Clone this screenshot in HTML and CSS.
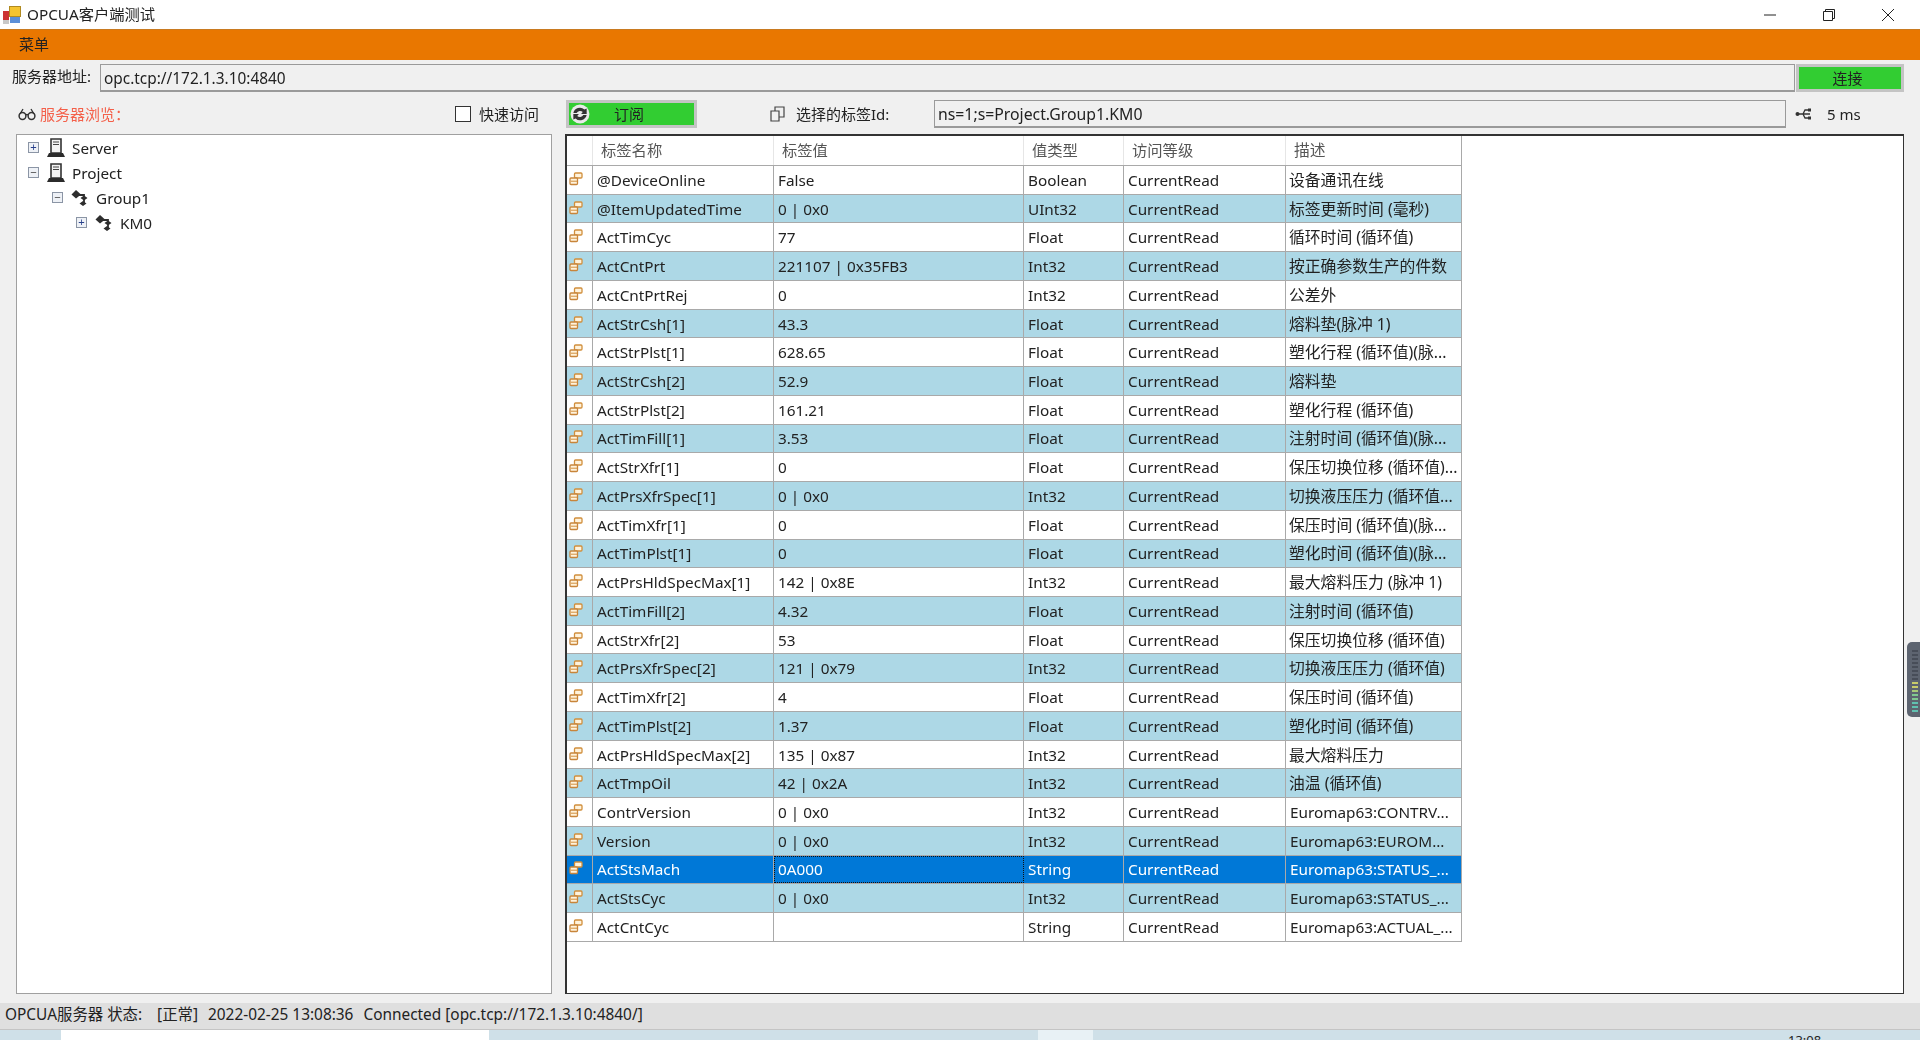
FILE: index.html
```html
<!DOCTYPE html>
<html lang="zh-CN">
<head>
<meta charset="utf-8">
<title>OPCUA客户端测试</title>
<link rel="stylesheet" href="styles.css">
</head>
<body>
<svg class="defs" width="0" height="0" aria-hidden="true">
  <symbol id="tag" viewBox="0 0 14 14">
    <rect x="5.500" y="1" width="7.500" height="5" rx="1" fill="#fff3dc" stroke="#d18f3c" stroke-width="1.300"/>
    <rect x="1" y="6" width="7.500" height="6.500" rx="1" fill="#fff3dc" stroke="#c8853a" stroke-width="1.300"/>
    <path d="M2 9.200h6" stroke="#d18f3c"/>
  </symbol>
  <symbol id="server" viewBox="0 0 18 20">
    <path d="M4 1h10v14H4z" fill="#f3f3f3" stroke="#333" stroke-width="1.600"/>
    <path d="M6 4h6M6 6.500h6" stroke="#444" stroke-width="1.200"/>
    <path d="M2 15h14l2 4H0z" fill="#2b2b2b"/>
  </symbol>
  <symbol id="group" viewBox="0 0 18 18">
    <path d="M0.500 5.500L5 1l5 4.500L5 9.500z" fill="#2e2e2e"/>
    <path d="M9.500 9L13 6.500 16.500 9 13 11.500zM8.500 14.500L12 12l3.500 2.500L12 17z" fill="#2e2e2e"/>
    <path d="M6 6h7v8" fill="none" stroke="#2e2e2e" stroke-width="1.800"/>
  </symbol>
</svg>

<div class="titlebar">
  <svg class="app-icon" viewBox="0 0 18 18">
    <rect x="6.500" y="0.500" width="11" height="10" fill="#f4c430" stroke="#b08a20"/>
    <rect x="0" y="5" width="6" height="9" fill="#cc3333"/>
    <rect x="7" y="11" width="10" height="6" fill="#5b8fd8"/>
    <rect x="0" y="14" width="6" height="4" fill="#c8c8c8"/>
  </svg>
  <span class="title-text">OPCUA客户端测试</span>
  <div class="win-controls">
    <svg class="win-btn" viewBox="0 0 14 14"><path d="M1 7h12" stroke="#222" stroke-width="1"/></svg>
    <svg class="win-btn" viewBox="0 0 14 14"><path d="M1.500 3.500h9v9h-9zM3.500 3.500v-2h9v9h-2" fill="none" stroke="#222"/></svg>
    <svg class="win-btn" viewBox="0 0 14 14"><path d="M1 1l12 12M13 1L1 13" stroke="#222"/></svg>
  </div>
</div>

<div class="menubar"><span>菜单</span></div>

<div class="addr-row">
  <span class="addr-label">服务器地址:</span>
  <div class="field addr-field">opc.tcp://172.1.3.10:4840</div>
  <div class="btn btn-connect"><span>连接</span></div>
</div>

<div class="tool-row">
  <div class="tool-left">
    <svg class="glasses" viewBox="0 0 18 14"><circle cx="4.500" cy="9" r="3.400" fill="none" stroke="#333" stroke-width="1.500"/><circle cx="13.500" cy="9" r="3.400" fill="none" stroke="#333" stroke-width="1.500"/><path d="M8 8q1-1 2 0M2 7l3-5M16 7l-3-5" fill="none" stroke="#333" stroke-width="1.300"/></svg>
    <span class="browse-label">服务器浏览：</span>
    <span class="check-box"></span>
    <span class="check-label">快速访问</span>
  </div>
  <div class="btn btn-sub">
    <svg class="refresh" viewBox="0 0 18 18"><circle cx="9" cy="9" r="8.500" fill="#eaeaea"/><path d="M3 8a6 6 0 0 1 10-3l2-1v5h-5l1.500-1.800A3.500 3.500 0 0 0 6 8zM15 10a6 6 0 0 1-10 3l-2 1V9h5L6.500 10.800A3.500 3.500 0 0 0 12 10z" fill="#333"/></svg>
    <span>订阅</span>
  </div>
  <svg class="copy-icon" viewBox="0 0 15 16"><path d="M1 5h8v10H1zM5 5V1h9v10H9" fill="none" stroke="#444" stroke-width="1.200"/></svg>
  <span class="id-label">选择的标签Id:</span>
  <div class="field id-field">ns=1;s=Project.Group1.KM0</div>
  <svg class="usb-icon" viewBox="0 0 18 14"><path d="M3 7h12M8 7l2-4h3M8 7l2 4h3" fill="none" stroke="#333" stroke-width="1.300"/><circle cx="2.500" cy="7" r="2" fill="#333"/><rect x="13" y="1.500" width="3" height="3" fill="#333"/><rect x="13" y="9.500" width="3" height="3" fill="#333"/></svg>
  <span class="ms">5 ms</span>
</div>

<div class="panels">
  <div class="tree">
    <div class="node"><span class="exp">+</span><svg class="node-icon"><use href="#server"/></svg><span>Server</span></div>
    <div class="node"><span class="exp open">−</span><svg class="node-icon"><use href="#server"/></svg><span>Project</span></div>
    <div class="node lvl2"><span class="exp open">−</span><svg class="node-icon"><use href="#group"/></svg><span>Group1</span></div>
    <div class="node lvl3"><span class="exp">+</span><svg class="node-icon"><use href="#group"/></svg><span>KM0</span></div>
  </div>

  <div class="grid-panel">
    <div class="row head"><div></div><div>标签名称</div><div>标签值</div><div>值类型</div><div>访问等级</div><div>描述</div></div>
    <div class="row"><div class="ic"><svg><use href="#tag"/></svg></div><div>@DeviceOnline</div><div>False</div><div>Boolean</div><div>CurrentRead</div><div>设备通讯在线</div></div>
    <div class="row alt"><div class="ic"><svg><use href="#tag"/></svg></div><div>@ItemUpdatedTime</div><div>0 | 0x0</div><div>UInt32</div><div>CurrentRead</div><div>标签更新时间 (毫秒)</div></div>
    <div class="row"><div class="ic"><svg><use href="#tag"/></svg></div><div>ActTimCyc</div><div>77</div><div>Float</div><div>CurrentRead</div><div>循环时间 (循环值)</div></div>
    <div class="row alt"><div class="ic"><svg><use href="#tag"/></svg></div><div>ActCntPrt</div><div>221107 | 0x35FB3</div><div>Int32</div><div>CurrentRead</div><div>按正确参数生产的件数</div></div>
    <div class="row"><div class="ic"><svg><use href="#tag"/></svg></div><div>ActCntPrtRej</div><div>0</div><div>Int32</div><div>CurrentRead</div><div>公差外</div></div>
    <div class="row alt"><div class="ic"><svg><use href="#tag"/></svg></div><div>ActStrCsh[1]</div><div>43.3</div><div>Float</div><div>CurrentRead</div><div>熔料垫(脉冲 1)</div></div>
    <div class="row"><div class="ic"><svg><use href="#tag"/></svg></div><div>ActStrPlst[1]</div><div>628.65</div><div>Float</div><div>CurrentRead</div><div>塑化行程 (循环值)(脉...</div></div>
    <div class="row alt"><div class="ic"><svg><use href="#tag"/></svg></div><div>ActStrCsh[2]</div><div>52.9</div><div>Float</div><div>CurrentRead</div><div>熔料垫</div></div>
    <div class="row"><div class="ic"><svg><use href="#tag"/></svg></div><div>ActStrPlst[2]</div><div>161.21</div><div>Float</div><div>CurrentRead</div><div>塑化行程 (循环值)</div></div>
    <div class="row alt"><div class="ic"><svg><use href="#tag"/></svg></div><div>ActTimFill[1]</div><div>3.53</div><div>Float</div><div>CurrentRead</div><div>注射时间 (循环值)(脉...</div></div>
    <div class="row"><div class="ic"><svg><use href="#tag"/></svg></div><div>ActStrXfr[1]</div><div>0</div><div>Float</div><div>CurrentRead</div><div>保压切换位移 (循环值)...</div></div>
    <div class="row alt"><div class="ic"><svg><use href="#tag"/></svg></div><div>ActPrsXfrSpec[1]</div><div>0 | 0x0</div><div>Int32</div><div>CurrentRead</div><div>切换液压压力 (循环值...</div></div>
    <div class="row"><div class="ic"><svg><use href="#tag"/></svg></div><div>ActTimXfr[1]</div><div>0</div><div>Float</div><div>CurrentRead</div><div>保压时间 (循环值)(脉...</div></div>
    <div class="row alt"><div class="ic"><svg><use href="#tag"/></svg></div><div>ActTimPlst[1]</div><div>0</div><div>Float</div><div>CurrentRead</div><div>塑化时间 (循环值)(脉...</div></div>
    <div class="row"><div class="ic"><svg><use href="#tag"/></svg></div><div>ActPrsHldSpecMax[1]</div><div>142 | 0x8E</div><div>Int32</div><div>CurrentRead</div><div>最大熔料压力 (脉冲 1)</div></div>
    <div class="row alt"><div class="ic"><svg><use href="#tag"/></svg></div><div>ActTimFill[2]</div><div>4.32</div><div>Float</div><div>CurrentRead</div><div>注射时间 (循环值)</div></div>
    <div class="row"><div class="ic"><svg><use href="#tag"/></svg></div><div>ActStrXfr[2]</div><div>53</div><div>Float</div><div>CurrentRead</div><div>保压切换位移 (循环值)</div></div>
    <div class="row alt"><div class="ic"><svg><use href="#tag"/></svg></div><div>ActPrsXfrSpec[2]</div><div>121 | 0x79</div><div>Int32</div><div>CurrentRead</div><div>切换液压压力 (循环值)</div></div>
    <div class="row"><div class="ic"><svg><use href="#tag"/></svg></div><div>ActTimXfr[2]</div><div>4</div><div>Float</div><div>CurrentRead</div><div>保压时间 (循环值)</div></div>
    <div class="row alt"><div class="ic"><svg><use href="#tag"/></svg></div><div>ActTimPlst[2]</div><div>1.37</div><div>Float</div><div>CurrentRead</div><div>塑化时间 (循环值)</div></div>
    <div class="row"><div class="ic"><svg><use href="#tag"/></svg></div><div>ActPrsHldSpecMax[2]</div><div>135 | 0x87</div><div>Int32</div><div>CurrentRead</div><div>最大熔料压力</div></div>
    <div class="row alt"><div class="ic"><svg><use href="#tag"/></svg></div><div>ActTmpOil</div><div>42 | 0x2A</div><div>Int32</div><div>CurrentRead</div><div>油温 (循环值)</div></div>
    <div class="row"><div class="ic"><svg><use href="#tag"/></svg></div><div>ContrVersion</div><div>0 | 0x0</div><div>Int32</div><div>CurrentRead</div><div class="en">Euromap63:CONTRV...</div></div>
    <div class="row alt"><div class="ic"><svg><use href="#tag"/></svg></div><div>Version</div><div>0 | 0x0</div><div>Int32</div><div>CurrentRead</div><div class="en">Euromap63:EUROM...</div></div>
    <div class="row sel"><div class="ic"><svg><use href="#tag"/></svg></div><div>ActStsMach</div><div class="focus">0A000</div><div>String</div><div>CurrentRead</div><div class="en">Euromap63:STATUS_...</div></div>
    <div class="row alt"><div class="ic"><svg><use href="#tag"/></svg></div><div>ActStsCyc</div><div>0 | 0x0</div><div>Int32</div><div>CurrentRead</div><div class="en">Euromap63:STATUS_...</div></div>
    <div class="row"><div class="ic"><svg><use href="#tag"/></svg></div><div>ActCntCyc</div><div></div><div>String</div><div>CurrentRead</div><div class="en">Euromap63:ACTUAL_...</div></div>
  </div>
</div>

<div class="statusbar">
  <span class="st-label">OPCUA服务器 状态:</span><span>[正常]</span><span>2022-02-25 13:08:36</span><span>Connected [opc.tcp://172.1.3.10:4840/]</span>
</div>

<div class="taskbar">
  <div class="task-white"></div>
  <div class="task-light"></div>
  <div class="task-clock">13:08</div>
</div>

<div class="side-widget">
  <div class="leds">
    <i class="off"></i><i class="off"></i><i class="off"></i><i class="off"></i><i class="off"></i><i class="off"></i><i class="off"></i><i class="off"></i>
    <i class="y"></i><i class="y"></i><i class="yg"></i><i class="g"></i><i class="g"></i><i class="t"></i><i class="t"></i><i class="t"></i>
  </div>
</div>
</body>
</html>
```
FILE: styles.css
```css
* { box-sizing: border-box; }
html, body { height: 100%; }
body {
  margin: 0;
  width: 1920px;
  height: 1040px;
  overflow: hidden;
  display: flex;
  flex-direction: column;
  background: #f0f0f0;
  color: #222;
  font: 15px/20px "Noto Sans", "Noto Sans CJK SC", sans-serif;
  position: relative;
  filter: blur(0.35px);
}
.defs { position: absolute; }

.titlebar {
  height: 29px;
  background: #fff;
  display: flex;
  align-items: center;
  padding-left: 3px;
}
.app-icon { width: 18px; height: 18px; margin-right: 6px; }
.title-text { font-size: 15.300px; position: relative; top: -1px; }
.win-controls {
  margin-left: auto;
  display: flex;
  gap: 45px;
  padding-right: 25px;
}
.win-btn { width: 14px; height: 14px; }

.menubar {
  height: 31px;
  background: #e97700;
  border-top: 1px solid #c97a20;
  display: flex;
  align-items: center;
  padding-left: 19px;
  padding-bottom: 2px;
  font-size: 15px;
}

.addr-row {
  height: 28px;
  margin-top: 4px;
  display: flex;
  align-items: center;
  padding-left: 12px;
}
.addr-label { width: 88px; position: relative; top: -2px; }
.field {
  height: 28px;
  background: #f0f0f0;
  border: 1px solid #9a9a9a;
  border-bottom-width: 2px;
  padding-left: 3px;
  display: flex;
  align-items: center;
}
.addr-field { width: 1695px; font-size: 15.400px; padding-top: 2px; }
.btn {
  background: #32cd32;
  border: 3px solid #c4c4c4;
  display: flex;
  align-items: center;
  height: 28px;
}
.btn-connect { width: 108px; margin-left: 1px; justify-content: center; padding-right: 5px; }
.tool-row {
  height: 28px;
  margin-top: 8px;
  display: flex;
  align-items: center;
  padding-left: 18px;
}
.tool-left { width: 548px; display: flex; align-items: center; }
.glasses { width: 18px; height: 14px; margin-right: 4px; }
.browse-label { color: #f4604a; width: 415px; }
.check-box {
  width: 16px;
  height: 16px;
  background: #fff;
  border: 1px solid #333;
  margin-right: 8px;
}
.btn-sub {
  width: 131px;
  padding-left: 1px;
  border-width: 3px;
}
.refresh { width: 20px; height: 20px; margin-right: 24px; }
.copy-icon { width: 15px; height: 16px; margin-left: 73px; margin-right: 11px; }
.id-label { width: 138px; }
.id-field { width: 852px; font-size: 15.800px; }
.usb-icon { width: 18px; height: 14px; margin-left: 9px; margin-right: 14px; }

.panels {
  height: 860px;
  margin-top: 6px;
  padding: 0 16px;
  display: flex;
  gap: 13px;
}
.tree {
  width: 536px;
  background: #fff;
  border: 1px solid #a0a0a0;
  font-size: 15.300px;
}
.node {
  height: 25px;
  display: flex;
  align-items: center;
  padding-left: 11px;
}
.lvl2 { padding-left: 35px; }
.lvl3 { padding-left: 59px; }
.exp {
  width: 11px;
  height: 11px;
  border: 1px solid #8b95a5;
  background: #eef1f6;
  color: #27408b;
  font: 11px/9px "Liberation Sans", sans-serif;
  text-align: center;
}
.open { color: #444; }
.node-icon { width: 18px; height: 20px; margin: 0 7px 0 8px; }

.grid-panel {
  width: 1339px;
  background: #fff;
  border: 1px solid #333;
  border-width: 2px 1px 1px 2px;
  overflow: hidden;
}
.row {
  display: grid;
  grid-template-columns: 26px 181px 250px 100px 162px 176px;
  width: 895px;
  height: 28.740px;
  border-bottom: 1px solid #a9a9a9;
  align-items: stretch;
}
.row > div {
  border-right: 1px solid #a9a9a9;
  padding-left: 4px;
  display: flex;
  align-items: center;
  white-space: nowrap;
  overflow: hidden;
  font-size: 15.300px;
}
.row > div:last-child { font-size: 15.800px; padding-left: 3px; }
.row > div.en { font-size: 15.300px; padding-left: 4px; }
.head {
  height: 30px;
  color: #555;
}
.head > div {
  border-right-color: #e6e6e6;
  padding-left: 8px;
  padding-bottom: 2px;
}
.head > div:last-child { border-right-color: #a9a9a9; padding-left: 8px; }
.alt { background: #add8e6; }
.sel { background: #0078d7; color: #fff; }
.row > .focus { border: 1px dotted #111; padding-left: 3px; }
.row > .ic { padding-left: 2px; }
.ic svg { width: 14px; height: 14px; margin-top: -2px; }

.statusbar {
  height: 26px;
  margin-top: 9px;
  background: #dfdfdf;
  display: flex;
  align-items: center;
  padding-left: 5px;
  padding-bottom: 2px;
  gap: 10px;
  font-size: 15.400px;
}
.st-label { margin-right: 5px; }
.taskbar {
  height: 11px;
  border-top: 1px solid #c4c4c4;
  background: #cfe0e8;
  display: flex;
  overflow: hidden;
}
.task-white { width: 428px; margin-left: 61px; background: #fff; }
.task-light { width: 55px; margin-left: 549px; background: #e8f1f5; }
.task-clock {
  margin-left: 695px;
  font-size: 13px;
  line-height: 20px;
}
.side-widget {
  position: absolute;
  right: 0;
  top: 642px;
  width: 13px;
  height: 75px;
  background: #5d6470;
  border-radius: 5px 0 0 5px;
  padding: 8px 0 0 5px;
}
.leds { display: flex; flex-direction: column; gap: 2px; }
.leds i { display: block; width: 6px; height: 2px; }
.off { background: #474d58; }
.y { background: #c8cc6a; }
.yg { background: #a8c878; }
.g { background: #80c890; }
.t { background: #60c0b0; }
```
